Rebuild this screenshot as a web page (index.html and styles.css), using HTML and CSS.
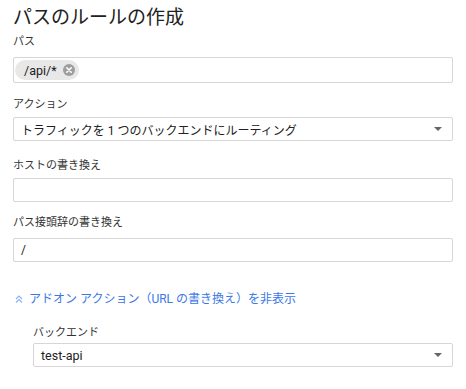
FILE: index.html
```html
<!DOCTYPE html>
<html lang="ja">
<head>
<meta charset="utf-8">
<link rel="stylesheet" href="styles.css">
</head>
<body>
<div class="page">
  <h1 class="title">パスのルールの作成</h1>
  <div class="field f-path">
    <div class="label">パス</div>
    <div class="box chips">
      <span class="chip">/api/*<span class="chip-x"><svg width="12" height="12" viewBox="0 0 12 12"><circle cx="6" cy="6" r="6" fill="#9e9e9e"/><path d="M3.8 3.8 L8.2 8.2 M8.2 3.8 L3.8 8.2" stroke="#fff" stroke-width="1.6" stroke-linecap="round"/></svg></span></span>
    </div>
  </div>
  <div class="field f-action">
    <div class="label">アクション</div>
    <div class="box select"><span class="value">トラフィックを 1 つのバックエンドにルーティング</span><span class="caret"></span></div>
  </div>
  <div class="field f-host">
    <div class="label">ホストの書き換え</div>
    <div class="box input"></div>
  </div>
  <div class="field f-prefix">
    <div class="label">パス接頭辞の書き換え</div>
    <div class="box input"><span class="value">/</span></div>
  </div>
  <a class="toggle" href="#"><svg class="chev" width="8" height="8" viewBox="0 0 8 8"><path d="M1 4 L4 1 L7 4 M1 7.5 L4 4.5 L7 7.5" fill="none" stroke="#8ab4f8" stroke-width="1.2"/></svg><span>アドオン アクション（URL の書き換え）を非表示</span></a>
  <div class="field f-backend">
    <div class="label">バックエンド</div>
    <div class="box select"><span class="value latin">test-api</span><span class="caret"></span></div>
  </div>
</div>
</body>
</html>
```
FILE: styles.css
```css
html, body {
  margin: 0;
  padding: 0;
  background: #fff;
}
body {
  font-family: Roboto, "Noto Sans CJK JP", sans-serif;
  color: #212121;
}
.page {
  display: flex;
  flex-direction: column;
  padding: 6px 13px 0 13px;
  width: 440px;
}
.title {
  margin: 0;
  font-size: 19px;
  font-weight: 400;
  line-height: 24px;
  color: #212121;
}
.field {
  display: flex;
  flex-direction: column;
}
.label {
  font-size: 11px;
  line-height: 16px;
  color: #333;
  margin-bottom: 4px;
}
.box {
  box-sizing: border-box;
  height: 24px;
  border: 1px solid #d6d6d6;
  border-radius: 2px;
  display: flex;
  align-items: center;
  padding: 0 7px;
  font-size: 12px;
  color: #212121;
}
.f-path { margin-top: 4px; }
.f-path .label { margin-bottom: 7px; }
.f-path .box { height: 26px; padding-left: 1px; }
.f-action { margin-top: 14px; }
.f-host { margin-top: 17px; }
.f-prefix { margin-top: 13px; }
.f-prefix .label { margin-bottom: 7px; }
.chip {
  display: inline-flex;
  align-items: center;
  height: 20px;
  padding: 0 4px 0 9px;
  background: #e8e8e8;
  border-radius: 10px;
  font-size: 12.5px;
  color: #212121;
}
.chip-x {
  display: inline-flex;
  margin-left: 6px;
}
.select {
  justify-content: space-between;
}
.select .latin { font-size: 12.5px; }
.caret {
  width: 0;
  height: 0;
  border-left: 4px solid transparent;
  border-right: 4px solid transparent;
  border-top: 4px solid #666;
  margin-right: 3px;
}
.toggle {
  display: flex;
  align-items: center;
  margin-top: 29px;
  font-size: 12px;
  line-height: 16px;
  color: #3b78e7;
  text-decoration: none;
}
.chev {
  margin: 0 6px 0 2px;
}
.f-backend {
  margin-top: 18px;
  margin-left: 20px;
}
.f-backend .label { margin-bottom: 2px; }
```
